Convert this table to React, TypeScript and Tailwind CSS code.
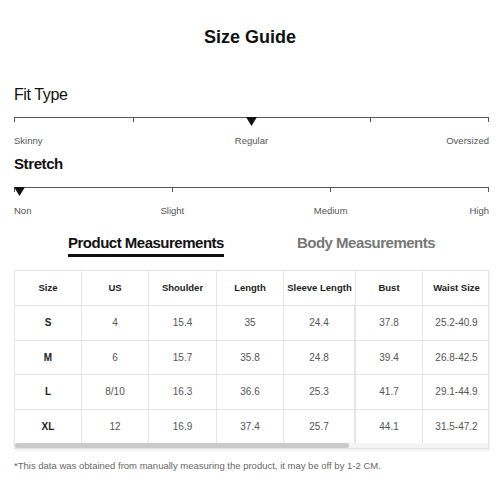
const sizes = [
  { size: "S", us: "4", shoulder: "15.4", length: "35", sleeve: "24.4", bust: "37.8", waist: "25.2-40.9" },
  { size: "M", us: "6", shoulder: "15.7", length: "35.8", sleeve: "24.8", bust: "39.4", waist: "26.8-42.5" },
  { size: "L", us: "8/10", shoulder: "16.3", length: "36.6", sleeve: "25.3", bust: "41.7", waist: "29.1-44.9" },
  { size: "XL", us: "12", shoulder: "16.9", length: "37.4", sleeve: "25.7", bust: "44.1", waist: "31.5-47.2" },
];

const headers = ["Size", "US", "Shoulder", "Length", "Sleeve Length", "Bust", "Waist Size"];

const cols = "grid grid-cols-[67px_67px_68px_67px_72px_67px_67px]";

function Marker() {
  return (
    <svg width="11" height="9" viewBox="0 0 11 9" className="block">
      <polygon points="0,0 11,0 5.5,9" fill="#111" />
    </svg>
  );
}

function Scale({ ticks, markerLeft }: { ticks: number; markerLeft: string }) {
  return (
    <div className="relative h-[17px]">
      <div className="flex h-[5px] justify-between border-t border-[#555]">
        {Array.from({ length: ticks }).map((_, i) => (
          <div key={i} className="w-px bg-[#555]" />
        ))}
      </div>
      <div className={`absolute top-0 ${markerLeft}`}>
        <Marker />
      </div>
    </div>
  );
}

export default function App() {
  return (
    <div className="h-[500px] w-[500px] bg-white font-['Liberation_Sans',Arial,sans-serif]">
      <h1 className="pt-[26px] text-center text-[18px] font-bold leading-[22px] text-[#111]">Size Guide</h1>

      <div className="ml-[14px] w-[475px]">
        <h2 className="mt-[37px] text-[16px] leading-[20px] tracking-[-0.4px] text-[#111]">Fit Type</h2>
        <div className="mt-[12px]">
          <Scale ticks={5} markerLeft="left-[232px]" />
        </div>
        <div className="grid grid-cols-3 text-[9.5px] leading-[14px] text-[#555]">
          <span>Skinny</span>
          <span className="text-center">Regular</span>
          <span className="text-right">Oversized</span>
        </div>

        <h2 className="mt-[6px] text-[15px] font-bold leading-[20px] tracking-[-0.4px] text-[#111]">Stretch</h2>
        <div className="mt-[13px]">
          <Scale ticks={4} markerLeft="left-0" />
        </div>
        <div className="grid grid-cols-[1fr_2fr_2fr_1fr] text-[9.5px] leading-[14px] text-[#555]">
          <span>Non</span>
          <span className="text-center">Slight</span>
          <span className="text-center">Medium</span>
          <span className="text-right">High</span>
        </div>

        <div className="mt-[15px] flex items-start text-[15px] font-bold leading-[20px] tracking-[-0.5px]">
          <span className="ml-[54px] border-b-[3px] border-[#111] pb-px text-[#111]">Product Measurements</span>
          <span className="ml-[73px] text-[#777]">Body Measurements</span>
        </div>

        <div className="mt-[13px] border border-[#e4e4e4] shadow-[1px_2px_3px_rgba(0,0,0,0.06)]">
          <div className={`${cols} h-[34px] items-center text-center text-[9.5px] font-bold text-[#222]`}>
            {headers.map((h, i) => (
              <div key={h} className={`flex h-full items-center justify-center ${i < 6 ? "border-r border-[#e4e4e4]" : ""}`}>
                {h}
              </div>
            ))}
          </div>
          {sizes.map((r) => (
            <div key={r.size} className={`${cols} h-[34.5px] border-t border-[#e4e4e4] text-center text-[10px] text-[#555]`}>
              <div className="flex items-center justify-center border-r border-[#e4e4e4] font-bold text-[#222]">{r.size}</div>
              <div className="flex items-center justify-center border-r border-[#e4e4e4]">{r.us}</div>
              <div className="flex items-center justify-center border-r border-[#e4e4e4]">{r.shoulder}</div>
              <div className="flex items-center justify-center border-r border-[#e4e4e4]">{r.length}</div>
              <div className="flex items-center justify-center border-r-2 border-[#e4e4e4]">{r.sleeve}</div>
              <div className="flex items-center justify-center border-r border-[#e4e4e4]">{r.bust}</div>
              <div className="flex items-center justify-center">{r.waist}</div>
            </div>
          ))}
          <div className="h-[5px] bg-[#f4f4f4]">
            <div className="h-full w-[334px] rounded-full bg-[#c9c9c9]" />
          </div>
        </div>

        <p className="mt-[10px] text-[9.5px] leading-[13px] text-[#666]">
          *This data was obtained from manually measuring the product, it may be off by 1-2 CM.
        </p>
      </div>
    </div>
  );
}
